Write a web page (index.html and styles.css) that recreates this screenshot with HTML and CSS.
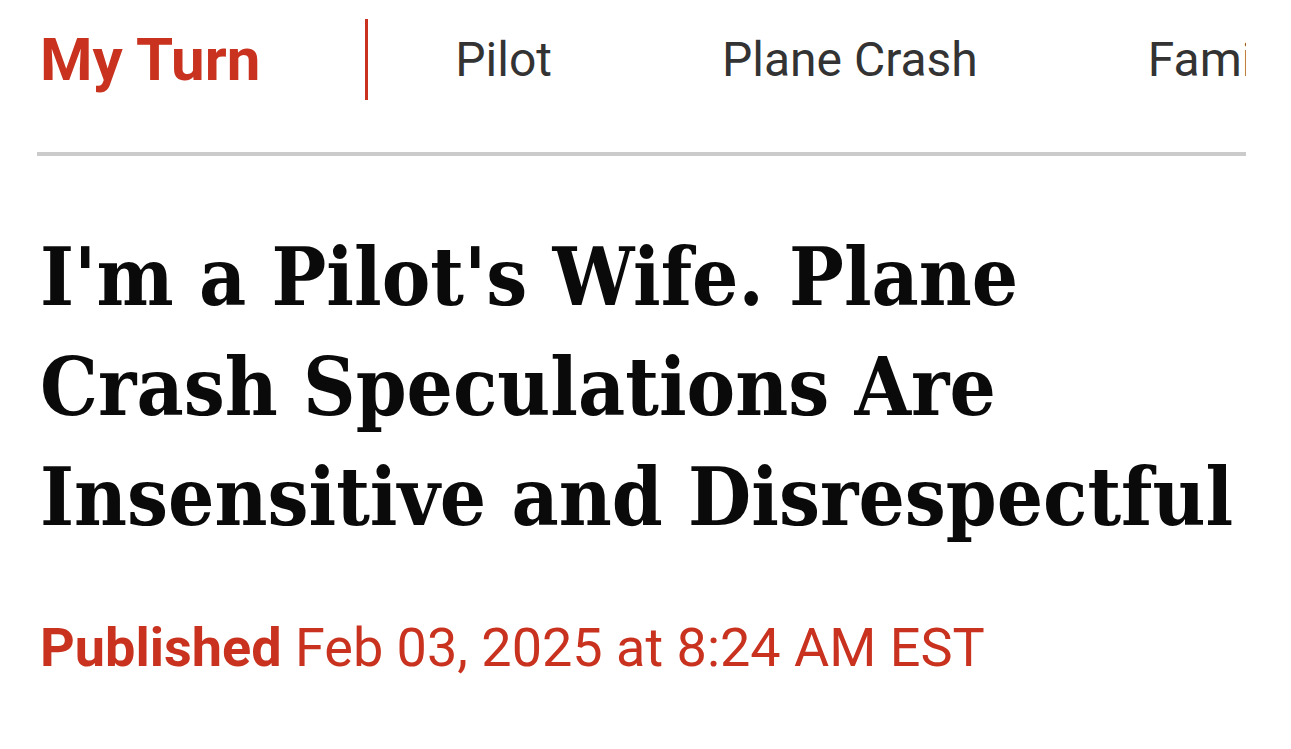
FILE: index.html
```html
<!DOCTYPE html>
<html lang="en">
<head>
<meta charset="utf-8">
<title>My Turn</title>
<link rel="stylesheet" href="styles.css">
</head>
<body>
<div class="page">
  <nav class="topnav">
    <a class="section" href="#">My Turn</a>
    <span class="divider"></span>
    <a class="tag first" href="#">Pilot</a>
    <a class="tag" href="#">Plane Crash</a>
    <a class="tag" href="#">Family</a>
  </nav>
  <hr class="rule">
  <h1 class="headline">I'm a Pilot's Wife. Plane<br>Crash Speculations Are<br>Insensitive and Disrespectful</h1>
  <p class="meta"><strong>Published</strong> Feb 03, 2025 at 8:24 AM EST</p>
</div>
</body>
</html>
```
FILE: styles.css
```css
html, body {
  margin: 0;
  padding: 0;
  background: #fff;
}
.page {
  padding: 19px 45px 0 40px;
}
.topnav {
  display: flex;
  align-items: center;
  height: 81px;
  overflow: hidden;
  white-space: nowrap;
  font-family: Roboto, "Liberation Sans", sans-serif;
}
.section {
  color: #c8321f;
  font-weight: 700;
  font-size: 60px;
  text-decoration: none;
  margin-right: 105px;
}
.divider {
  flex: none;
  width: 3px;
  height: 81px;
  background: #c8321f;
}
.tag {
  color: #333;
  font-size: 48px;
  text-decoration: none;
  margin-left: 170px;
}
.tag.first {
  margin-left: 87px;
}
.rule {
  border: 0;
  height: 4px;
  background: #cbcbcb;
  margin: 52px 0 0 -3px;
}
.headline {
  font-family: "DejaVu Serif", serif;
  font-stretch: condensed;
  font-weight: 700;
  font-size: 81px;
  line-height: 110px;
  color: #0a0a0a;
  white-space: nowrap;
  margin: 66px 0 0 0;
}
.meta {
  font-family: Roboto, "Liberation Sans", sans-serif;
  font-size: 54px;
  color: #c8321f;
  margin: 64px 0 0 0;
}
.meta strong {
  font-weight: 700;
}
```
